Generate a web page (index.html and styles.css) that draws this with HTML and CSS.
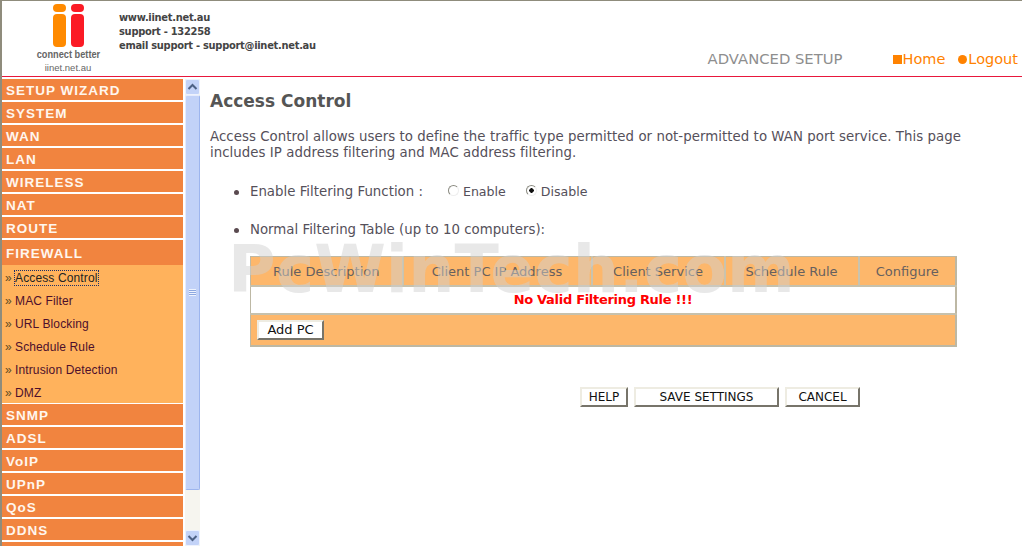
FILE: index.html
```html
<!DOCTYPE html>
<html>
<head>
  <title>Access Control</title>
  <link rel="stylesheet" href="styles.css">
</head>
<body>

  <div class="header">
    <div class="logo">
      <svg class="logo-mark" width="31" height="43" viewBox="0 0 31 43">
        <rect x="0" y="0" width="13" height="8" rx="4" fill="#ff8a00"/>
        <rect x="0" y="10" width="13" height="33" rx="4" fill="#ff8a00"/>
        <rect x="18" y="0" width="13" height="8" rx="4" fill="#fb1b25"/>
        <rect x="18" y="10" width="13" height="33" rx="4" fill="#fb1b25"/>
      </svg>
      <div class="logo-tag">connect better</div>
      <div class="logo-url">iinet.net.au</div>
    </div>
    <div class="contact">
      <div>www.iinet.net.au</div>
      <div>support - 132258</div>
      <div>email support - support@iinet.net.au</div>
    </div>
    <div class="header-right">
      <span class="setup-title">ADVANCED SETUP</span>
      <a class="top-link home"><span class="square"></span>Home</a>
      <a class="top-link"><span class="dot"></span>Logout</a>
    </div>
  </div>

  <div class="layout">
    <div class="sidebar">
      <div class="menu">
        <div class="menu-item">SETUP WIZARD</div>
        <div class="menu-item">SYSTEM</div>
        <div class="menu-item">WAN</div>
        <div class="menu-item">LAN</div>
        <div class="menu-item">WIRELESS</div>
        <div class="menu-item">NAT</div>
        <div class="menu-item">ROUTE</div>
        <div class="menu-item menu-open">FIREWALL</div>
        <div class="submenu">
          <div class="sub-item"><span class="arrow">»</span><span class="focused">Access Control</span></div>
          <div class="sub-item"><span class="arrow">»</span>MAC Filter</div>
          <div class="sub-item"><span class="arrow">»</span>URL Blocking</div>
          <div class="sub-item"><span class="arrow">»</span>Schedule Rule</div>
          <div class="sub-item"><span class="arrow">»</span>Intrusion Detection</div>
          <div class="sub-item"><span class="arrow">»</span>DMZ</div>
        </div>
        <div class="menu-item">SNMP</div>
        <div class="menu-item">ADSL</div>
        <div class="menu-item">VoIP</div>
        <div class="menu-item">UPnP</div>
        <div class="menu-item">QoS</div>
        <div class="menu-item">DDNS</div>
        <div class="menu-item"></div>
      </div>
      <div class="scrollbar">
        <div class="scroll-btn">
          <svg width="11" height="8" viewBox="0 0 11 8"><path d="M1.500 6 5.500 2 9.500 6" fill="none" stroke="#4d6185" stroke-width="2"/></svg>
        </div>
        <div class="scroll-thumb">
          <div class="grip"></div>
        </div>
        <div class="scroll-track"></div>
        <div class="scroll-btn">
          <svg width="11" height="8" viewBox="0 0 11 8"><path d="M1.500 2 5.500 6 9.500 2" fill="none" stroke="#4d6185" stroke-width="2"/></svg>
        </div>
      </div>
    </div>

    <div class="content">
      <h2>Access Control</h2>
      <p class="intro">Access Control allows users to define the traffic type permitted or not-permitted to WAN port service. This page includes IP address filtering and MAC address filtering.</p>

      <div class="option option-filter">
        <span class="bullet"></span>
        <span class="option-label">Enable Filtering Function :</span>
        <label class="radio radio-first"><input type="radio" name="filter">Enable</label>
        <label class="radio"><input type="radio" name="filter" checked>Disable</label>
      </div>

      <div class="option option-table">
        <span class="bullet"></span>
        <span class="option-label">Normal Filtering Table (up to 10 computers):</span>
      </div>

      <table class="rules">
        <tr>
          <th class="col-desc">Rule Description</th>
          <th class="col-ip">Client PC IP Address</th>
          <th class="col-service">Client Service</th>
          <th class="col-schedule">Schedule Rule</th>
          <th>Configure</th>
        </tr>
        <tr>
          <td colspan="5" class="empty">No Valid Filtering Rule !!!</td>
        </tr>
        <tr>
          <td colspan="5" class="actions"><button class="btn btn-add">Add PC</button></td>
        </tr>
      </table>

      <div class="buttons">
        <button class="btn btn-help">HELP</button>
        <button class="btn btn-save">SAVE SETTINGS</button>
        <button class="btn btn-cancel">CANCEL</button>
      </div>
    </div>
  </div>

  <div class="watermark">PcWinTech.com</div>

</body>
</html>
```

FILE: styles.css
```css
html, body {
  height: 100%;
}

body {
  margin: 0;
  overflow: hidden;
  position: relative;
  background: white;
  color: #55505a;
  font-family: "DejaVu Sans", Verdana, sans-serif;
  font-size: 13px;
  box-sizing: border-box;
  border-top: 1px solid #8f8c7c;
  border-left: 2px solid #8f8c7c;
}

.header {
  height: 75px;
  border-bottom: 1px solid #e8173c;
  display: flex;
  position: relative;
}

.logo {
  width: 100px;
  margin-left: 16px;
  flex: none;
  display: flex;
  flex-direction: column;
  align-items: center;
  padding-top: 3px;
  box-sizing: border-box;
  color: #666;
}

.logo-mark {
  display: block;
}

.logo-tag {
  font-family: "Liberation Sans", Arial, sans-serif;
  font-size: 10px;
  font-weight: bold;
  margin-top: 1px;
  line-height: 13px;
  transform: scaleX(.92);
  white-space: nowrap;
}

.logo-url {
  font-family: "Liberation Sans", Arial, sans-serif;
  font-size: 9.500px;
  margin-top: 1px;
  line-height: 11px;
}

.contact {
  margin-left: 1px;
  padding-top: 10px;
  font-size: 11px;
  font-weight: bold;
  font-stretch: condensed;
  line-height: 14px;
  color: #444;
  white-space: nowrap;
  letter-spacing: -.28px;
}

.header-right {
  margin-left: auto;
  padding-right: 4px;
  align-self: flex-end;
  padding-bottom: 9px;
  display: flex;
  align-items: baseline;
  white-space: nowrap;
}

.setup-title {
  font-size: 14.800px;
  color: #8e8e8e;
  margin-right: 50px;
}

.top-link {
  color: #ff8200;
  font-size: 14.500px;
}

.home {
  margin-right: 13px;
}

.square {
  display: inline-block;
  width: 9px;
  height: 9px;
  background: #ff8200;
  margin-right: 1px;
}

.dot {
  display: inline-block;
  width: 9px;
  height: 9px;
  border-radius: 50%;
  background: #ff8200;
  margin-right: 1px;
}

.layout {
  display: flex;
  margin-top: 2px;
}

.sidebar {
  display: flex;
  flex: none;
  height: 467px;
  width: 198px;
  overflow: hidden;
}

.menu {
  width: 181px;
  flex: none;
}

.menu-item {
  height: 21px;
  line-height: 23px;
  background: #f1843f;
  border-bottom: 2px solid white;
  padding-left: 4px;
  font-family: "Liberation Sans", Arial, sans-serif;
  font-size: 13.500px;
  font-weight: bold;
  letter-spacing: 1px;
  color: #fff6ee;
}

.menu-open {
  height: 25px;
  line-height: 27px;
  border-bottom: 0;
}

.submenu {
  background: #ffb25c;
  border-bottom: 1px solid white;
  height: 138px;
}

.sub-item {
  height: 23px;
  line-height: 27px;
  padding-left: 3px;
  font-family: "Liberation Sans", Arial, sans-serif;
  font-size: 12px;
  letter-spacing: .13px;
  color: #4d0f2c;
  white-space: nowrap;
}

.arrow {
  color: #5c4a22;
  display: inline-block;
  width: 10px;
}

.focused {
  outline: 1px dotted #1c2f6a;
  color: #222;
}

.scrollbar {
  width: 15px;
  margin-left: 2px;
  display: flex;
  flex-direction: column;
  background: #f6f5ef;
}

.scroll-btn {
  height: 16px;
  flex: none;
  display: flex;
  align-items: center;
  justify-content: center;
  background: #c3d3f8;
  border: 1px solid #eef2fd;
  box-sizing: border-box;
  border-radius: 2px;
}

.scroll-thumb {
  height: 395px;
  flex: none;
  background: #c2d2f8;
  border: 1px solid #9db5ee;
  border-top-color: #e6ecfc;
  border-left-color: #e6ecfc;
  box-sizing: border-box;
  border-radius: 2px;
  display: flex;
  align-items: center;
  justify-content: center;
}

.grip {
  width: 7px;
  height: 7px;
  background: repeating-linear-gradient(#eef3fe 0 1px, #8ea8e0 1px 2px);
}

.scroll-track {
  flex: 1;
}

.content {
  flex: 1;
  padding-left: 10px;
}

h2 {
  margin: 13px 0 0;
  font-size: 17px;
  line-height: 19px;
  color: #555;
}

.intro {
  margin: 18px 0 0;
  font-size: 13.330px;
  letter-spacing: .045px;
  line-height: 16px;
  width: 765px;
}

.option {
  display: flex;
  align-items: center;
  font-size: 13.330px;
  line-height: 16px;
}

.option-filter {
  margin-top: 23px;
}

.option-table {
  margin-top: 22px;
}

.bullet {
  width: 5px;
  height: 5px;
  border-radius: 50%;
  background: #5a4a50;
  margin-left: 24px;
  margin-right: 11px;
  flex: none;
}

.radio {
  display: flex;
  align-items: center;
  font-size: 12.600px;
}

.radio-first {
  margin-left: 25px;
  margin-right: 20px;
}

.radio input {
  appearance: none;
  width: 11px;
  height: 11px;
  margin: 0 4px 3px 0;
  border-radius: 50%;
  border: 1px solid #8a8a80;
  border-right-color: #eee;
  border-bottom-color: #eee;
  background: white;
}

.radio input:checked {
  background: radial-gradient(circle, #111 0 2px, white 2.500px);
}

.rules {
  margin: 18px 0 0 40px;
  width: 707px;
  border-collapse: collapse;
  table-layout: fixed;
  background: #fdb76b;
  border: 2px solid #bdb8a4;
  border-top-width: 1px;
  border-left-width: 1px;
  color: #66605f;
}

.rules th {
  box-sizing: border-box;
  height: 29px;
  padding: 2px 0 0;
  font-weight: normal;
  border-right: 2px solid #c9c3ae;
  border-bottom: 2px solid #c6c1ad;
}

.rules th:last-child {
  border-right: 0;
}

.col-desc {
  width: 152px;
}

.col-ip {
  width: 189px;
}

.col-service {
  width: 133px;
}

.col-schedule {
  width: 134px;
}

.empty {
  height: 26px;
  padding: 0;
  background: white;
  border-bottom: 2px solid #c6c1ad;
  text-align: center;
  color: #f00;
  font-weight: bold;
  letter-spacing: -.3px;
}

.actions {
  height: 30px;
  padding: 0 0 0 6px;
}

.btn {
  display: block;
  padding: 0;
  background: white;
  color: #111;
  font-family: "DejaVu Sans", Verdana, sans-serif;
  font-size: 12px;
  height: 20px;
  box-sizing: border-box;
  border: 2px solid;
  border-color: #eeece2 #77746a #77746a #eeece2;
}

.btn-add {
  width: 67px;
  font-size: 13px;
}

.buttons {
  display: flex;
  margin: 40px 0 0 370px;
}

.btn-help {
  width: 48px;
}

.btn-save {
  width: 145px;
  margin-left: 6px;
}

.btn-cancel {
  width: 75px;
  margin-left: 6px;
}

.watermark {
  position: absolute;
  left: 226px;
  top: 229px;
  font-size: 65px;
  font-weight: bold;
  line-height: 80px;
  color: rgba(208, 208, 208, .49);
  white-space: nowrap;
  pointer-events: none;
}
```
